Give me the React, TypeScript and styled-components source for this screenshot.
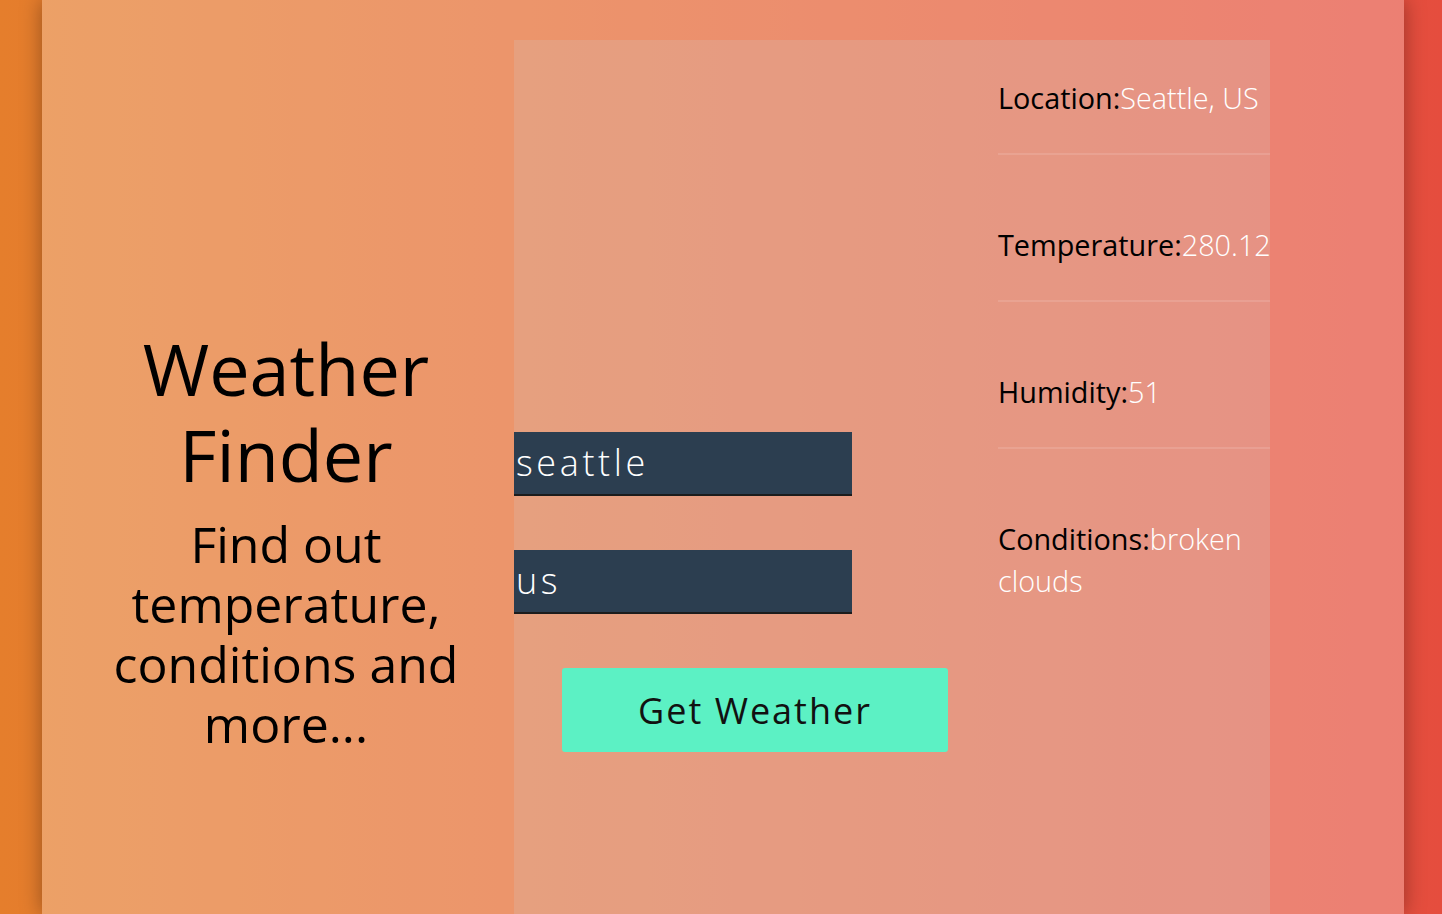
import React from 'react';
import { createGlobalStyle, styled } from 'styled-components';

let Global = createGlobalStyle`
  * {
    box-sizing: border-box;
  }

  html,
  body {
    margin: 0;
    padding: 0;
    height: 100%;
  }

  body {
    background: linear-gradient(to right, #e57e2c, #e54d3e);
    font-family: 'Open Sans', 'Noto Sans', sans-serif;
    overflow: hidden;
  }
`;

let Main = styled('main')`
  height: 100vh;
  margin: 0 38px 0 42px;
  background: rgba(255, 255, 255, 0.28);
  box-shadow: 0 0 20px rgba(0, 0, 0, 0.35);
  display: grid;
  grid-template-columns: 472px 756px 1fr;
`;

let TitleCol = styled('section')`
  padding: 325px 0 0 16px;
  text-align: center;
  color: #000;
`;

let Title = styled('h1')`
  margin: 0 0 16px;
  font-size: 72px;
  font-weight: 400;
  line-height: 1.2;
`;

let Subtitle = styled('h3')`
  margin: 0;
  font-size: 50px;
  font-weight: 400;
  line-height: 60px;
`;

let Panel = styled('section')`
  margin-top: 40px;
  background: rgba(215, 185, 175, 0.3);
  display: grid;
  grid-template-columns: 484px 272px;
`;

let Form = styled('form')`
  padding-top: 392px;
  display: flex;
  flex-direction: column;
  align-items: flex-start;
  gap: 54px;
`;

let Input = styled('input')`
  width: 338px;
  height: 64px;
  margin: 0;
  padding: 0 0 2px 2px;
  border: none;
  border-bottom: 2px solid #1c1c1c;
  background: #2c3e50;
  color: #fff;
  font-family: inherit;
  font-size: 36px;
  font-weight: 300;
  letter-spacing: 3.6px;
  outline: none;
`;

let Button = styled('button')`
  width: 386px;
  height: 84px;
  margin-left: 48px;
  border: none;
  border-radius: 3px;
  background: #5cf1c4;
  color: #111;
  font-family: inherit;
  font-size: 36px;
  font-weight: 400;
  letter-spacing: 2px;
  cursor: pointer;
`;

let InfoList = styled('ul')`
  list-style: none;
  margin: 0;
  padding: 3px 0 0;
  display: flex;
  flex-direction: column;
  gap: 35px;
`;

let InfoRow = styled('li')<{ $last?: boolean }>`
  padding: 34px 0;
  border-bottom: 2px solid ${p => (p.$last ? 'transparent' : 'rgba(255, 255, 255, 0.12)')};
  font-size: 28.8px;
  line-height: 42px;
`;

let Key = styled('span')`
  color: #000;
  font-weight: 400;
`;

let Value = styled('span')`
  color: #fff;
  font-weight: 300;
`;

let info = [
  { key: 'Location', value: 'Seattle, US' },
  { key: 'Temperature', value: '280.12' },
  { key: 'Humidity', value: '51' },
  { key: 'Conditions', value: 'broken clouds' }
];

export default function App() {
  return (
    <>
      <Global />
      <Main>
        <TitleCol>
          <Title>
            Weather
            <br />
            Finder
          </Title>
          <Subtitle>Find out temperature, conditions and more...</Subtitle>
        </TitleCol>

        <Panel>
          <Form onSubmit={e => e.preventDefault()}>
            <Input type="text" name="city" defaultValue="seattle" />
            <Input type="text" name="country" defaultValue="us" />
            <Button>Get Weather</Button>
          </Form>

          <InfoList>
            {info.map((item, i) => (
              <InfoRow key={item.key} $last={i == info.length - 1}>
                <Key>{item.key}:</Key>
                <Value>{item.value}</Value>
              </InfoRow>
            ))}
          </InfoList>
        </Panel>
      </Main>
    </>
  );
}
